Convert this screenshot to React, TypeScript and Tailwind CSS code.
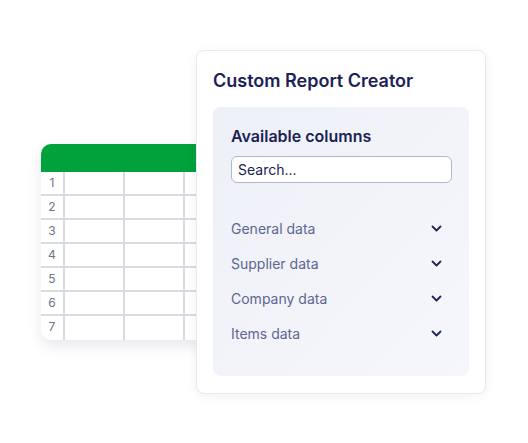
import React from 'react';

const rows = [1, 2, 3, 4, 5, 6, 7];
const groups = ['General data', 'Supplier data', 'Company data', 'Items data'];

const Chevron: React.FC = () => (
    <svg width="11" height="7" viewBox="0 0 11 7" fill="none">
        <path d="M1.5 1.5L5.5 5.5L9.5 1.5" stroke="#1f2552" strokeWidth="1.8" strokeLinecap="round" strokeLinejoin="round" />
    </svg>
);

const Sheet: React.FC = () => (
    <div className="absolute left-[41px] top-[144px] w-[190px] rounded-l-[10px] bg-white shadow-[0_6px_14px_rgba(30,40,90,0.10)]">
        <div className="h-[28px] rounded-tl-[10px] bg-[#01a23c]" />
        {rows.map(n => (
            <div key={n} className={`flex h-[24px] ${n < 7 ? 'border-b-2 border-[#d9dbe3]' : ''}`}>
                <div className="w-[24px] border-r-2 border-[#d9dbe3] text-center text-[12px] leading-[22px] text-[#6b7191]">{n}</div>
                <div className="w-[60px] border-r-2 border-[#d9dbe3]" />
                <div className="w-[60px] border-r-2 border-[#d9dbe3]" />
                <div className="w-[46px]" />
            </div>
        ))}
    </div>
);

const ReportPanel: React.FC = () => (
    <div className="absolute left-[196px] top-[50px] w-[290px] h-[344px] rounded-[8px] border border-[#e8eaf0] bg-white px-[16px] pt-[18px] shadow-[0_2px_12px_rgba(30,40,90,0.06)]">
        <h2 className="text-[18px] leading-[24px] font-semibold text-[#1c2254]">Custom Report Creator</h2>
        <div className="mt-[14px] h-[269px] rounded-[8px] bg-gradient-to-br from-[#edf0f7] to-[#f6f7fb] pl-[18px] pr-[17px] pt-[17px]">
            <h3 className="text-[16px] leading-[24px] font-semibold text-[#1c2254]">Available columns</h3>
            <div className="mt-[8px] h-[27px] rounded-[6px] border border-[#b3b7c9] bg-white px-[6px] text-[14px] leading-[25px] text-[#1c2254]">Search...</div>
            <div className="mt-[28px]">
                {groups.map(g => (
                    <div key={g} className="flex h-[35px] items-center justify-between pr-[10px]">
                        <span className="text-[14px] text-[#5e6691]">{g}</span>
                        <Chevron />
                    </div>
                ))}
            </div>
        </div>
    </div>
);

const App: React.FC = () => (
    <div className="relative w-[528px] h-[443px] overflow-hidden bg-white" style={{ fontFamily: 'Inter, "Noto Sans", sans-serif' }}>
        <Sheet />
        <ReportPanel />
    </div>
);

export default App;
